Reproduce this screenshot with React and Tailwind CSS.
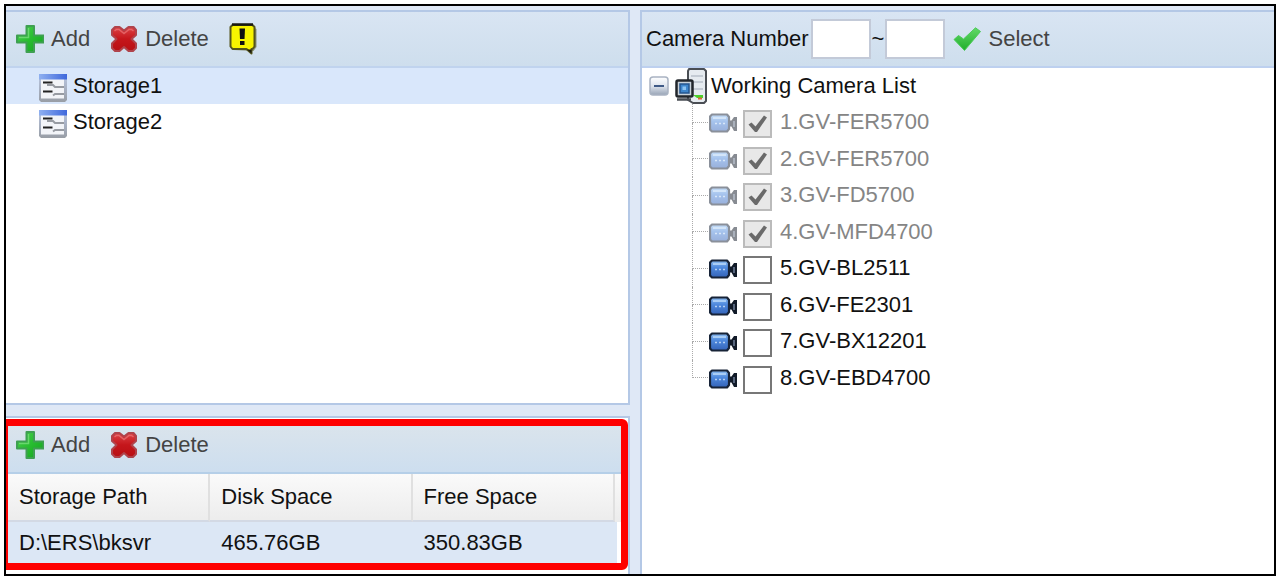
import { useState } from "react";

const storages = ["Storage1", "Storage2"];

const cameras = [
  { name: "1.GV-FER5700", used: true },
  { name: "2.GV-FER5700", used: true },
  { name: "3.GV-FD5700", used: true },
  { name: "4.GV-MFD4700", used: true },
  { name: "5.GV-BL2511", used: false },
  { name: "6.GV-FE2301", used: false },
  { name: "7.GV-BX12201", used: false },
  { name: "8.GV-EBD4700", used: false },
];

const paths = [{ path: "D:\\ERS\\bksvr", disk: "465.76GB", free: "350.83GB" }];

function PlusIcon() {
  return (
    <svg className="size-7 shrink-0" viewBox="0 0 28 28" aria-hidden="true">
      <defs>
        <linearGradient id="plus" x1="0" y1="0" x2="1" y2="1">
          <stop offset="0" stopColor="#4fd052" />
          <stop offset="0.5" stopColor="#28bd30" />
          <stop offset="1" stopColor="#14a01f" />
        </linearGradient>
      </defs>
      <path
        d="M10.500 1h7.500v9.500h9.500v7h-9.500v9.500h-7.500v-9.500h-9.500v-7h9.500z"
        fill="url(#plus)"
        stroke="#3f9f52"
        strokeWidth="2"
        strokeLinejoin="round"
      />
      <path d="M12.500 3v9.500h-9.500" fill="none" stroke="#7fe085" strokeWidth="1.500" opacity="0.7" />
    </svg>
  );
}

function CrossIcon() {
  return (
    <svg className="size-7 shrink-0" viewBox="0 0 28 28" aria-hidden="true">
      <defs>
        <linearGradient id="cross" x1="0" y1="0" x2="0" y2="1">
          <stop offset="0" stopColor="#dc4347" />
          <stop offset="0.5" stopColor="#c5161b" />
          <stop offset="1" stopColor="#b80f14" />
        </linearGradient>
      </defs>
      <path
        d="M5 2H9.500L14 5.500L18.500 2H23.500L26 5V10L21.500 14L26 18.500V23L23 26H18.500L14 22L9.500 26H5L2 23V18.500L6.500 14L2 10V5Z"
        fill="url(#cross)"
        stroke="#b0434b"
        strokeWidth="2"
        strokeLinejoin="round"
      />
      <path d="M4.500 6L6.500 4.500H9L14 8.500L19 4.500H21.500L23.500 6" fill="none" stroke="#ee8386" strokeWidth="1.500" opacity="0.6" />
    </svg>
  );
}

function WarningIcon() {
  return (
    <svg className="h-8 w-7" viewBox="0 0 28 32" aria-hidden="true">
      <path d="M24 4l3.500 2v18l-3 4-20-1-3-3z" fill="#6d7048" opacity="0.7" />
      <path
        d="M3.500 2h20l2 2v19.500l-2 2.500h-1v4.500l-5-4.500h-14l-2-2.500v-19.500z"
        fill="#f8f400"
        stroke="#55551c"
        strokeWidth="2"
        strokeLinejoin="round"
      />
      <path d="M3 1.500h21" stroke="#1a1a10" strokeWidth="2.500" />
      <path d="M18 26.500h4.500v4z" fill="#1a1a10" />
      <path d="M10.500 5.500h5.500l-0.500 10.500h-4.500z" fill="#111" />
      <rect x="11" y="18" width="4.500" height="4" fill="#111" />
    </svg>
  );
}

function CheckIcon() {
  return (
    <svg className="h-6 w-7" viewBox="0 0 28 24" aria-hidden="true">
      <defs>
        <linearGradient id="check" x1="0" y1="0" x2="0" y2="1">
          <stop offset="0" stopColor="#62d868" />
          <stop offset="1" stopColor="#1fae2b" />
        </linearGradient>
      </defs>
      <path
        d="M1 12.500L5.500 8.500L10.500 12L22.500 0.800L27.500 4.500L11.500 23.500Z"
        fill="url(#check)"
        stroke="#4ccb58"
        strokeLinejoin="round"
      />
    </svg>
  );
}

function StorageIcon() {
  return (
    <svg className="size-7 shrink-0" viewBox="0 0 28 28" aria-hidden="true">
      <defs>
        <linearGradient id="storageBar" x1="0" y1="0" x2="1" y2="0">
          <stop offset="0" stopColor="#8fb0f0" />
          <stop offset="1" stopColor="#3f68dc" />
        </linearGradient>
        <linearGradient id="storageEdge" x1="0" y1="0" x2="0" y2="1">
          <stop offset="0" stopColor="#bac8e4" />
          <stop offset="1" stopColor="#989da5" />
        </linearGradient>
      </defs>
      <path d="M0 0h28v26l-2 2h-24l-2-2z" fill="url(#storageEdge)" />
      <rect x="2" y="5" width="23" height="19.500" fill="#f2f4f8" />
      <rect x="0" y="0" width="28" height="5.500" fill="url(#storageBar)" />
      <path d="M4 8.500h9.500M4 17.500h9.500" stroke="#222" strokeWidth="2.200" />
      <path d="M8 11h6l2 2h9M14 21.500l2-1.500h9" fill="none" stroke="#979ba2" strokeWidth="2" />
    </svg>
  );
}

function ServerIcon() {
  return (
    <svg className="h-9 w-8 shrink-0" viewBox="0 0 32 36" aria-hidden="true">
      <path
        d="M14 1h15l2 2v30l-2 2h-11l-5-3v-29z"
        fill="#e6ebf0"
        stroke="#4a4e54"
        strokeWidth="2"
        strokeLinejoin="round"
      />
      <path d="M16 8h12M16 14h12M18 21h10" stroke="#b9c1ca" strokeWidth="1.500" />
      <path d="M18 27h10v3h-6z" fill="#4cd02c" />
      <path d="M23 29.500h4v2h-4z" fill="#d86a35" />
      <rect x="1.500" y="12.500" width="16" height="16" rx="1.500" fill="#c9d2da" stroke="#22262b" strokeWidth="2.500" />
      <rect x="5" y="16" width="9" height="9" fill="#3e86cc" stroke="#24558e" strokeWidth="1.500" />
      <rect x="7.500" y="18.500" width="3.500" height="3.500" fill="#8cc3f1" />
      <path d="M2 31.500h14" stroke="#4a4e54" strokeWidth="2.500" />
    </svg>
  );
}

function CameraIcon({ dim }) {
  return (
    <svg className={dim ? "h-5 w-7 opacity-50" : "h-5 w-7"} viewBox="0 0 28 20" aria-hidden="true">
      <defs>
        <linearGradient id="camera" x1="0" y1="0" x2="0" y2="1">
          <stop offset="0" stopColor="#8fbdf0" />
          <stop offset="0.4" stopColor="#4f8ade" />
          <stop offset="1" stopColor="#3463b8" />
        </linearGradient>
      </defs>
      <path d="M19 7.500h3.500L25 4h3v14h-3L22.500 13.500H19z" fill="#111a28" />
      <path d="M25 8v6" stroke="#6f7f98" strokeWidth="1.500" />
      <path
        d="M3 1.500h15l2 2.500v12l-2 2.500h-15l-2-2v-13z"
        fill="url(#camera)"
        stroke="#172337"
        strokeWidth="2.200"
        strokeLinejoin="round"
      />
      <path d="M4 5h13" stroke="#a9cdf5" strokeWidth="2" />
      <path d="M6 10.500h11" stroke="#b5d0f3" strokeWidth="1.500" strokeDasharray="2 2" />
    </svg>
  );
}

function ToggleIcon() {
  return (
    <svg className="size-5" viewBox="0 0 20 20" aria-hidden="true">
      <defs>
        <linearGradient id="toggle" x1="0" y1="0" x2="0" y2="1">
          <stop offset="0" stopColor="#ffffff" />
          <stop offset="0.5" stopColor="#dfe5ee" />
          <stop offset="1" stopColor="#98a4b6" />
        </linearGradient>
      </defs>
      <rect x="1" y="1" width="18" height="18" rx="3" fill="url(#toggle)" stroke="#a9b3c2" strokeWidth="1.500" />
      <path d="M5 10h10" stroke="#3f5a86" strokeWidth="2" />
    </svg>
  );
}

function ToolButton({ icon, children }) {
  return (
    <button type="button" className="flex items-center gap-[7px] text-[#444]">
      {icon}
      {children}
    </button>
  );
}

function CameraRow({ camera, last }) {
  const line = "flex-1 border-l border-dotted border-[#aaa]";
  return (
    <li className="flex">
      <span className="mr-px flex w-4 flex-col">
        <span className={line + " border-b"}></span>
        <span className={last ? "flex-1" : line}></span>
      </span>
      <label className={camera.used ? "flex items-center text-[#858585]" : "flex items-center"}>
        <span className="mt-0.5 mr-1.5">
          <CameraIcon dim={camera.used} />
        </span>
        <span className="mt-1 mr-2 grid">
          <input
            type="checkbox"
            defaultChecked={camera.used}
            disabled={camera.used}
            className="peer col-start-1 row-start-1 h-7 w-[29px] appearance-none border-2 border-[#777] bg-white disabled:border-[#bbb] disabled:bg-[#e8e8e8]"
          />
          <svg
            className="pointer-events-none invisible col-start-1 row-start-1 h-7 w-[29px] peer-checked:visible"
            viewBox="0 0 29 28"
            aria-hidden="true"
          >
            <path d="M5.500 14.500L8.500 12.500L12.500 16.500L21 5.500L24 7.500L14 22H12z" fill="#6a6a6a" />
          </svg>
        </span>
        {camera.name}
      </label>
    </li>
  );
}

export default function App() {
  const [selected, setSelected] = useState("Storage1");
  const [open, setOpen] = useState(true);

  return (
    <div className="flex min-h-screen bg-white p-1 pr-[3px] pb-[3px] font-['Liberation_Sans',Arial,sans-serif] text-[22px] leading-7 text-[#111]">
      <div className="grid flex-1 grid-cols-[624fr_634fr] gap-2.5 border-2 border-black bg-[#dfe8f6] pt-1">
        {/* Left column */}
        <div className="flex flex-col gap-[11px]">
          <section className="flex-1 border-y-2 border-r-2 border-[#b4c8e6] bg-white">
            <div className="flex h-14 items-center gap-5 border-b-2 border-[#c0d3ee] bg-linear-to-b from-[#d9e5f3] to-[#cedeed] pl-2.5">
              <ToolButton icon={<PlusIcon />}>Add</ToolButton>
              <ToolButton icon={<CrossIcon />}>Delete</ToolButton>
              <button type="button" aria-label="Warning">
                <WarningIcon />
              </button>
            </div>
            <ul>
              {storages.map((name) => (
                <li key={name}>
                  <button
                    type="button"
                    onClick={() => setSelected(name)}
                    className={
                      name === selected
                        ? "flex h-9 w-full items-center gap-1.5 bg-[#d9e7fb] pl-[33px]"
                        : "flex h-9 w-full items-center gap-1.5 pl-[33px]"
                    }
                  >
                    <span className="pt-1">
                      <StorageIcon />
                    </span>
                    {name}
                  </button>
                </li>
              ))}
            </ul>
          </section>

          {/* Storage paths */}
          <section className="border-t-2 border-r-2 border-[#b4c8e6] bg-white pt-px pb-1">
            <div className="rounded-r-md border-[7px] border-l-2 border-[#fe0000]">
              <div className="flex h-12 items-center gap-5 border-b-2 border-[#b5cfe8] bg-linear-to-b from-[#dae4ec] to-[#cddeef] pb-2 pl-2">
                <ToolButton icon={<PlusIcon />}>Add</ToolButton>
                <ToolButton icon={<CrossIcon />}>Delete</ToolButton>
              </div>
              <table className="w-full table-fixed border-separate border-spacing-0 text-left">
                <thead>
                  <tr className="h-12 bg-linear-to-b from-[#fafafa] to-[#ececec]">
                    {["Storage Path", "Disk Space", "Free Space"].map((title) => (
                      <th
                        key={title}
                        scope="col"
                        className="w-[33%] border-r-2 border-b-2 border-r-[#e0e0e0] border-b-[#d3d9e4] pl-[11px] font-normal"
                      >
                        {title}
                      </th>
                    ))}
                    <td></td>
                  </tr>
                </thead>
                <tbody>
                  {paths.map((row) => (
                    <tr key={row.path} className="h-[41px] bg-[#dce7f5]">
                      <td className="pl-[11px]">{row.path}</td>
                      <td className="pl-[11px]">{row.disk}</td>
                      <td className="pl-[11px]">{row.free}</td>
                      <td className="border-r-4 border-white"></td>
                    </tr>
                  ))}
                </tbody>
              </table>
            </div>
          </section>
        </div>

        {/* Cameras */}
        <section className="border-t-2 border-l-2 border-[#b4c8e6] bg-white">
          <div className="flex h-14 items-center border-b-2 border-[#bdd0ef] bg-linear-to-b from-[#d9e5f3] to-[#cedeed] pl-1">
            <label htmlFor="from" className="mr-0.5">
              Camera Number
            </label>
            <input id="from" type="text" className="h-10 w-[60px] border-2 border-[#c3cad8] bg-white px-1" />
            <label htmlFor="to" className="px-px">
              ~
            </label>
            <input id="to" type="text" className="mr-2 h-10 w-[60px] border-2 border-[#c3cad8] bg-white px-1" />
            <ToolButton icon={<CheckIcon />}>Select</ToolButton>
          </div>
          <div className="flex h-9 items-center pl-[7px]">
            <button type="button" aria-label="Toggle list" onClick={() => setOpen(!open)} className="mr-1.5">
              <ToggleIcon />
            </button>
            <ServerIcon />
            <span className="ml-1">Working Camera List</span>
          </div>
          {open && (
            <ul className="ml-[50px] grid h-[292px] auto-rows-fr">
              {cameras.map((camera, i) => (
                <CameraRow key={camera.name} camera={camera} last={i === cameras.length - 1} />
              ))}
            </ul>
          )}
        </section>
      </div>
    </div>
  );
}
